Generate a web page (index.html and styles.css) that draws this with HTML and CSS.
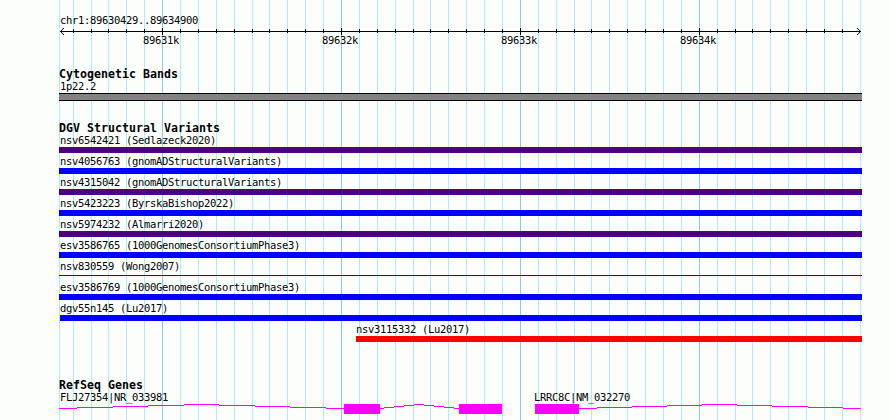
FILE: index.html
```html
<!DOCTYPE html>
<html lang="en">
<head>
    <meta charset="UTF-8">
    <title>chr1:89630429..89634900</title>
    <link rel="stylesheet" href="styles.css">
</head>
<body>
    <div class="browser">
        <!-- Vertical grid lines -->
        <svg class="grid" width="890" height="420" shape-rendering="crispEdges">
            <path class="minor" d="M59.5 0v420M73.5 0v420M91.5 0v420M108.5 0v420M126.5 0v420M144.5 0v420M180.5 0v420M198.5 0v420M216.5 0v420M234.5 0v420M252.5 0v420M269.5 0v420M287.5 0v420M305.5 0v420M323.5 0v420M359.5 0v420M377.5 0v420M395.5 0v420M413.5 0v420M430.5 0v420M448.5 0v420M466.5 0v420M484.5 0v420M502.5 0v420M538.5 0v420M556.5 0v420M574.5 0v420M591.5 0v420M609.5 0v420M627.5 0v420M645.5 0v420M663.5 0v420M681.5 0v420M717.5 0v420M735.5 0v420M752.5 0v420M770.5 0v420M788.5 0v420M806.5 0v420M824.5 0v420M842.5 0v420M860.5 0v420"/>
            <path class="major" d="M162.5 0v420M341.5 0v420M520.5 0v420M699.5 0v420"/>
        </svg>

        <div class="tracks">
            <div class="ruler">
                <div class="label">chr1:89630429..89634900</div>
                <svg class="axis" width="803" height="8" viewBox="59 27 803 8" shape-rendering="crispEdges">
                    <path d="M60 31.5H861"/>
                    <path d="M73.5 29v4M91.5 29v4M108.5 29v4M126.5 29v4M144.5 29v4M180.5 29v4M198.5 29v4M216.5 29v4M234.5 29v4M252.5 29v4M269.5 29v4M287.5 29v4M305.5 29v4M323.5 29v4M359.5 29v4M377.5 29v4M395.5 29v4M413.5 29v4M430.5 29v4M448.5 29v4M466.5 29v4M484.5 29v4M502.5 29v4M538.5 29v4M556.5 29v4M574.5 29v4M591.5 29v4M609.5 29v4M627.5 29v4M645.5 29v4M663.5 29v4M681.5 29v4M717.5 29v4M735.5 29v4M752.5 29v4M770.5 29v4M788.5 29v4M806.5 29v4M824.5 29v4M842.5 29v4"/>
                    <path d="M162.5 28v7M341.5 28v7M520.5 28v7M699.5 28v7"/>
                    <path d="M64 28L60.5 31.5L64 35M857 28L860.5 31.5L857 35"/>
                </svg>
                <div class="ticks">
                    <span>89631k</span>
                    <span>89632k</span>
                    <span>89633k</span>
                    <span>89634k</span>
                </div>
            </div>

            <div class="track cytoband">
                <h2>Cytogenetic Bands</h2>
                <div class="label">1p22.2</div>
                <div class="band"></div>
            </div>

            <div class="track variants">
                <h2>DGV Structural Variants</h2>
                <div class="variant"><div class="label">nsv6542421 (Sedlazeck2020)</div><div class="bar complex"></div></div>
                <div class="variant"><div class="label">nsv4056763 (gnomADStructuralVariants)</div><div class="bar gain"></div></div>
                <div class="variant"><div class="label">nsv4315042 (gnomADStructuralVariants)</div><div class="bar complex"></div></div>
                <div class="variant"><div class="label">nsv5423223 (ByrskaBishop2022)</div><div class="bar gain"></div></div>
                <div class="variant"><div class="label">nsv5974232 (Almarri2020)</div><div class="bar complex"></div></div>
                <div class="variant"><div class="label">esv3586765 (1000GenomesConsortiumPhase3)</div><div class="bar gain"></div></div>
                <div class="variant"><div class="label">nsv830559 (Wong2007)</div><div class="bar thin"></div></div>
                <div class="variant"><div class="label">esv3586769 (1000GenomesConsortiumPhase3)</div><div class="bar gain"></div></div>
                <div class="variant"><div class="label">dgv55n145 (Lu2017)</div><div class="bar gain inset"></div></div>
                <div class="variant partial"><div class="label">nsv3115332 (Lu2017)</div><div class="bar loss"></div></div>
            </div>

            <div class="track genes">
                <h2>RefSeq Genes</h2>
                <div class="gene-labels">
                    <div class="label">FLJ27354|NR_033981</div>
                    <div class="label">LRRC8C|NM_032270</div>
                </div>
                <svg class="gene-models" width="803" height="10" viewBox="59 404 803 10" shape-rendering="crispEdges">
                    <!-- Introns -->
                    <path class="intron" d="M59 408.5H77M77 407.5H113M113 406.5H148M148 405.5H184M184 404.5H219M219 405.5H255M255 406.5H290M290 407.5H326M326 408.5H344"/>
                    <path class="intron" d="M380 408.5H384M384 407.5H394M394 406.5H404M404 405.5H414M414 404.5H424M424 405.5H434M434 406.5H444M444 407.5H454M454 408.5H459"/>
                    <path class="intron" d="M579 408.5H597M597 407.5H632M632 406.5H667M667 405.5H702M702 404.5H737M737 405.5H772M772 406.5H808M808 407.5H843M843 408.5H861"/>
                    <!-- Exons -->
                    <path class="exon" d="M344 404h36v10h-36zM459 404h43v10h-43zM535 404h44v10h-44z"/>
                </svg>
            </div>
        </div>
    </div>
</body>
</html>
```

FILE: styles.css
```css
* {
    box-sizing: border-box;
}

body {
    margin: 0;
    background: #fcfefc;
    color: #000;
    font-family: "DejaVu Sans Mono", monospace;
}

.browser {
    display: grid;
    width: 890px;
    height: 420px;
    overflow: hidden;
}

/* Grid lines and tracks share one cell */
.grid,
.tracks {
    grid-area: 1 / 1;
}

.grid path {
    stroke-width: 1;
}

.minor {
    stroke: #afeeee;
}

.major {
    stroke: #87ceeb;
}

.tracks {
    display: flex;
    flex-direction: column;
    width: 862px;
    padding: 14px 0 0 59px;
}

.label {
    height: 13px;
    padding-left: 1px;
    font-size: 10.5px;
    line-height: 13px;
    letter-spacing: -0.32px;
    white-space: pre;
}

h2 {
    height: 12px;
    margin: 0;
    font-size: 11.6px;
    line-height: 12px;
    font-weight: bold;
    letter-spacing: 0.02px;
}

/* Ruler */
.axis {
    display: block;
}

.axis path {
    fill: none;
    stroke: #000;
}

.ticks {
    display: grid;
    grid-template-columns: repeat(4, 179px);
    height: 33px;
    padding-left: 84px;
    font-size: 10.5px;
    line-height: 11px;
    letter-spacing: -0.32px;
}

/* Cytogenetic bands */
.band {
    height: 8px;
    border: solid #000;
    border-width: 1px 0;
    background: #848284;
}

.variants {
    margin-top: 21px;
}

/* Structural variants */
.variant {
    height: 21px;
}

.bar {
    height: 6px;
}

.gain {
    background: #0000ff;
}

.loss {
    background: #ff0000;
}

.complex {
    background: #4b0082;
}

.thin {
    height: 1px;
    margin-top: 2px;
    background: #0000ff;
}

.inset {
    margin-left: 1px;
}

.partial {
    margin-left: 297px;
}

.partial .label {
    padding-left: 0;
}

/* Genes */
.genes {
    margin-top: 35px;
}

.gene-labels {
    display: grid;
    grid-template-columns: 475px auto;
}

.gene-labels .label + .label {
    padding-left: 0;
}

.gene-models {
    display: block;
}

.intron {
    stroke: #ff00ff;
}

.exon {
    fill: #ff00ff;
}
```
